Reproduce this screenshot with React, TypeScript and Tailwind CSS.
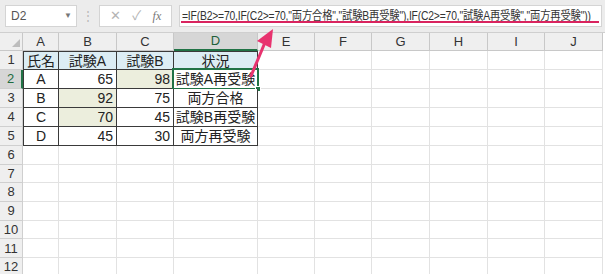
import React from "react";

const COLS = ["A", "B", "C", "D", "E", "F", "G", "H", "I", "J"];

type Cell = { v?: string; num?: boolean; green?: boolean };

const DATA: Cell[][] = [
  [{ v: "氏名" }, { v: "試験A" }, { v: "試験B" }, { v: "状況" }],
  [{ v: "A" }, { v: "65", num: true }, { v: "98", num: true, green: true }, { v: "試験A再受験" }],
  [{ v: "B" }, { v: "92", num: true, green: true }, { v: "75", num: true }, { v: "両方合格" }],
  [{ v: "C" }, { v: "70", num: true, green: true }, { v: "45", num: true }, { v: "試験B再受験" }],
  [{ v: "D" }, { v: "45", num: true }, { v: "30", num: true }, { v: "両方再受験" }],
];

const FORMULA =
  '=IF(B2>=70,IF(C2>=70,"両方合格","試験B再受験"),IF(C2>=70,"試験A再受験","両方再受験"))';

function Toolbar() {
  return (
    <div className="flex h-[33px] items-center border-b border-[#cfcfcf] bg-[#ececec] pl-[5px] pr-[3px]">
      <div className="flex h-[22px] w-[72px] items-center justify-between border border-[#d4d4d4] bg-white pl-[5px] pr-[4px] text-[12px] text-[#555]">
        <span>D2</span>
        <span className="text-[8px] text-[#777]">▼</span>
      </div>
      <div className="flex w-[22px] justify-center text-[12px] text-[#b8b8b8]">⋮</div>
      <div className="flex h-[22px] w-[73px] items-center justify-around border border-[#d4d4d4] bg-white px-[4px] text-[13px] text-[#b4b4b4]">
        <span>✕</span>
        <span>✓</span>
        <span className="font-['Liberation_Serif',serif] text-[12px] italic text-[#777]">fx</span>
      </div>
      <div className="relative ml-[7px] flex h-[22px] flex-1 items-center overflow-hidden border border-[#d4d4d4] bg-white pl-[2px]">
        <span className="block origin-left scale-x-[0.86] whitespace-nowrap text-[12px] tracking-[-0.2px] text-[#333]">
          {FORMULA}
        </span>
        <div className="absolute bottom-[3px] left-[1px] right-[2px] h-[2px] bg-[#d9245f]" />
      </div>
    </div>
  );
}

function Sheet() {
  const rows = 12;
  return (
    <div className="grid grid-cols-[23px_36px_58px_57px_84px_57px_57px_58px_58px_57px_58px] grid-rows-[18px_repeat(5,19px)_repeat(7,18.7px)] text-[#222]">
      {/* corner */}
      <div className="relative border-b border-r border-[#c8c8c8] bg-[#efefef]">
        <svg className="absolute bottom-[3px] right-[2px]" width="8" height="8" viewBox="0 0 8 8">
          <polygon points="8,0 8,8 0,8" fill="#bdbdbd" />
        </svg>
      </div>
      {COLS.map((c) => (
        <div
          key={c}
          className={
            "flex items-center justify-center border-r text-[13px] " +
            (c === "D"
              ? "border-b-2 border-b-[#217346] border-r-[#c8c8c8] bg-[#d6d6d6] text-[#1f5f3a]"
              : "border-b border-[#c8c8c8] bg-[#efefef] text-[#333]")
          }
        >
          {c}
        </div>
      ))}
      {Array.from({ length: rows }, (_, r) => {
        const rn = r + 1;
        return (
          <React.Fragment key={rn}>
            <div
              className={
                "flex items-center justify-center border-b border-r border-[#cfcfcf] text-[13px] " +
                (rn === 2
                  ? "border-r-2 border-r-[#217346] bg-[#d6d6d6] text-[#1f6b40]"
                  : "bg-[#efefef] text-[#333]")
              }
            >
              {rn}
            </div>
            {COLS.map((c, ci) => {
              const inTable = ci < 4 && rn <= 5;
              if (!inTable) {
                return <div key={c} className="border-b border-r border-[#e2e2e2] bg-white" />;
              }
              const cell = DATA[r][ci];
              const bg = rn === 1 ? "bg-[#dcedf4]" : cell.green ? "bg-[#eceedd]" : "bg-white";
              const selected = rn === 2 && c === "D";
              return (
                <div
                  key={c}
                  className={
                    "relative flex items-center whitespace-nowrap border-b border-r border-[#3a3a3a] text-[14px] leading-none " +
                    bg +
                    (rn === 1 ? " border-t" : "") +
                    (ci === 0 ? " border-l" : "") +
                    (cell.num ? " justify-end pr-[3px]" : " justify-center")
                  }
                >
                  {cell.v}
                  {selected && (
                    <>
                      <div className="absolute inset-[-2px] border-2 border-[#217346]" />
                      <div className="absolute bottom-[-4px] right-[-4px] h-[6px] w-[6px] border border-white bg-[#217346]" />
                    </>
                  )}
                </div>
              );
            })}
          </React.Fragment>
        );
      })}
    </div>
  );
}

export default function App() {
  return (
    <div className="relative h-[274px] w-[605px] overflow-hidden bg-white font-['Liberation_Sans','Noto_Sans_CJK_JP',sans-serif]">
      <Toolbar />
      <Sheet />
      <svg className="absolute left-0 top-0" width="605" height="274" viewBox="0 0 605 274">
        <line x1="251" y1="76" x2="266" y2="40" stroke="#e8336f" strokeWidth="3" strokeLinecap="round" />
        <polygon points="257,41 273,29 271,48" fill="#e8336f" />
      </svg>
    </div>
  );
}
